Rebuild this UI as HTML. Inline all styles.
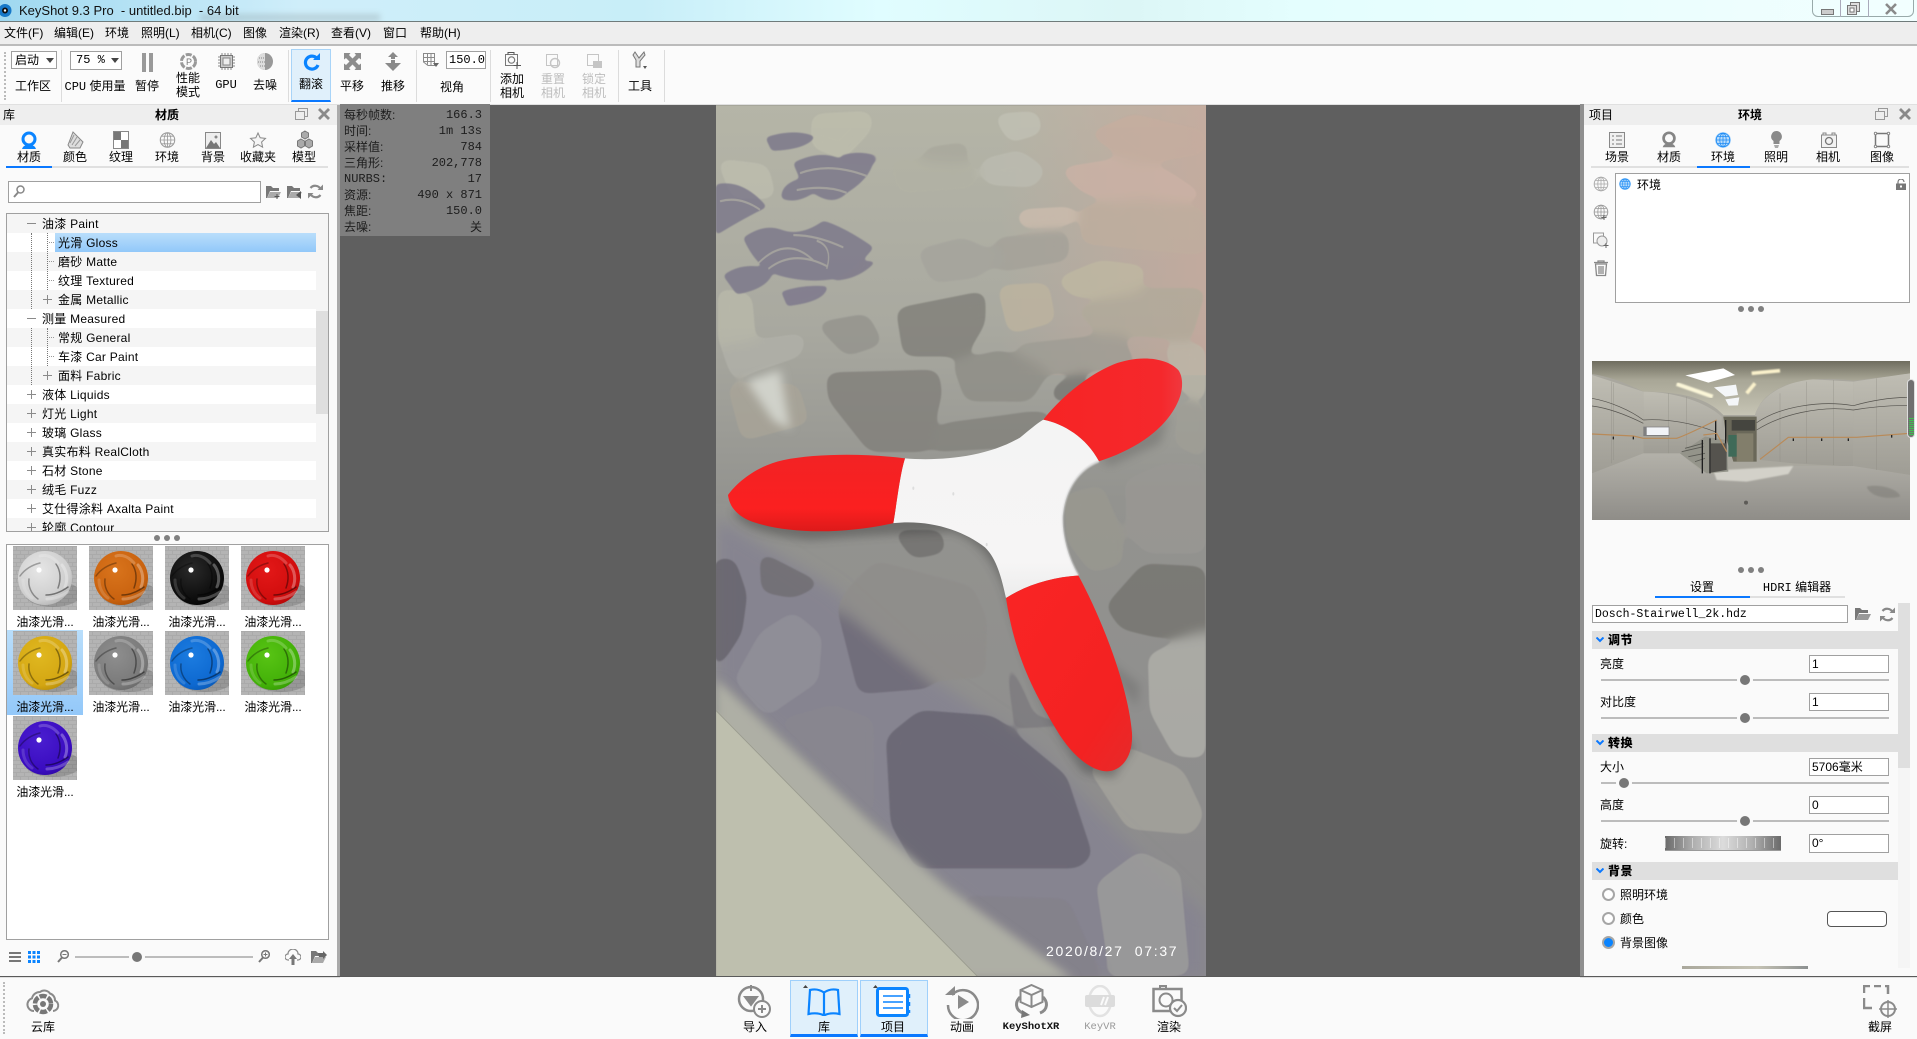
<!DOCTYPE html>
<html lang="zh"><head><meta charset="utf-8"><title>KeyShot 9.3 Pro</title>
<style>
html,body{margin:0;padding:0;width:1917px;height:1039px;overflow:hidden;background:#fafafa}
body{position:relative;font:12px/16px "Liberation Sans","WenQuanYi Zen Hei","Noto Sans CJK SC",sans-serif;color:#000}
.a{position:absolute}
.t{position:absolute;white-space:nowrap}
.c{position:absolute;white-space:nowrap;transform:translateX(-50%);text-align:center}
.m{font-family:"Liberation Mono","WenQuanYi Zen Hei","Noto Sans CJK SC",monospace}
.g{color:#bdbdbd}
.i{position:absolute;color:#858585;overflow:visible}
.box{position:absolute;background:#fff;border:1px solid #a0a0a0;box-sizing:border-box}
.sep{position:absolute;top:50px;height:52px;width:1px;background:#dcdcdc}
.row{position:absolute;left:7px;width:309px;height:19px;line-height:21px;white-space:nowrap}
.row span{position:absolute;white-space:nowrap;letter-spacing:.25px}
.pm{position:absolute;width:9px;height:9px;top:5px}
.pm:before{content:"";position:absolute;left:0;right:0;top:4px;height:1px;background:#8a8a8a}
.pl:after{content:"";position:absolute;top:0;bottom:0;left:4px;width:1px;background:#8a8a8a}
.vd{position:absolute;width:0;border-left:1px dotted #777}
.hd{position:absolute;width:5px;height:0;border-top:1px dotted #999}
.dot{position:absolute;width:6px;height:6px;border-radius:50%;background:#808080}
.sl{position:absolute;height:2px;background:#bcbcbc}
.kn{position:absolute;width:10px;height:10px;border-radius:50%;background:#777;box-shadow:0 0 0 3px #fafafa}
.sec{position:absolute;left:1592px;width:306px;height:18px;background:#dfdfdf;font-weight:bold;line-height:18px}
.sec b{position:absolute;left:16px;letter-spacing:.5px}
.sec svg{position:absolute;left:4px;top:6px}
.inp{position:absolute;left:1809px;width:80px;height:18px;background:#fff;border:1px solid #a0a0a0;box-sizing:border-box;line-height:16px;padding-left:2px;font-size:12px}
.rd{position:absolute;left:1602px;border-radius:50%;background:#fff;border:2px solid #a6a6a6;box-sizing:content-box;width:9px;height:9px}
.th{position:absolute;width:64px;height:64px}
.lb{position:absolute;width:76px;text-align:center;white-space:nowrap;letter-spacing:-.1px}
.st{position:absolute;left:344px;white-space:nowrap;color:#1d1d1d}
.sv{position:absolute;right:1435px;white-space:nowrap;color:#1d1d1d}
.bb{position:absolute;top:980px;width:68px;height:57px;box-sizing:border-box;background:#e0f0fb;border:1px solid #9fd0fb;border-bottom:3px solid #0a78ff}
</style></head><body>
<svg width="0" height="0" style="position:absolute"><defs>
<symbol id="globe" viewBox="0 0 20 20"><circle cx="10" cy="10" r="8.5" fill="none" stroke="currentColor" stroke-width="1.2"/><ellipse cx="10" cy="10" rx="4" ry="8.5" fill="none" stroke="currentColor" stroke-width="1"/><path d="M10 1.5v17M1.5 10h17M3 5.500h14M3 14.500h14" stroke="currentColor" fill="none"/></symbol>
<symbol id="ball" viewBox="0 0 20 20"><circle cx="10" cy="8" r="6" fill="none" stroke="currentColor" stroke-width="3"/><path d="M3 18c1-3 3-4 7-4s6 1 7 4z" fill="currentColor"/></symbol>
<symbol id="blades" viewBox="0 0 64 64"><g fill="none" stroke-linecap="round"><path d="M7 30C12 23 19 19 27 17" stroke="#000" stroke-opacity=".3" stroke-width="1.500"/><path d="M27 10c6-2 13 1 18 7" stroke="#fff" stroke-opacity=".2" stroke-width="3"/><path d="M43 18c5 7 5 16 2 24" stroke="#000" stroke-opacity=".4" stroke-width="1.500"/><path d="M49 19c5 6 6 15 3 22" stroke="#fff" stroke-opacity=".3" stroke-width="3"/><path d="M33 49c8 0 15-3 22-8" stroke="#000" stroke-opacity=".45" stroke-width="1.500"/><path d="M34 53c8 0 15-3 21-7" stroke="#fff" stroke-opacity=".25" stroke-width="3"/><path d="M16 33c-1 7 2 15 9 20" stroke="#000" stroke-opacity=".35" stroke-width="1.500"/><path d="M10 34c0 7 3 14 9 18" stroke="#fff" stroke-opacity=".15" stroke-width="3"/></g></symbol>
<pattern id="chk" width="8" height="8" patternUnits="userSpaceOnUse"><rect width="8" height="8" fill="#b4b4b4"/><path d="M0 0h8v1H0zM0 4h8v1H0zM3 0h1v4H3zM7 4h1v4H7z" fill="#aaa"/></pattern>
<radialGradient id="s1" cx=".4" cy=".35" r=".8"><stop offset="0" stop-color="#e6e6e6"/><stop offset=".7" stop-color="#cdcdcd"/><stop offset="1" stop-color="#a5a5a5"/></radialGradient>
<radialGradient id="s2" cx=".4" cy=".35" r=".8"><stop offset="0" stop-color="#d9741c"/><stop offset=".7" stop-color="#c9620f"/><stop offset="1" stop-color="#9a4a08"/></radialGradient>
<radialGradient id="s3" cx=".4" cy=".35" r=".8"><stop offset="0" stop-color="#2a2a2a"/><stop offset=".7" stop-color="#0c0c0c"/><stop offset="1" stop-color="#000"/></radialGradient>
<radialGradient id="s4" cx=".4" cy=".35" r=".8"><stop offset="0" stop-color="#e31818"/><stop offset=".7" stop-color="#d00d0d"/><stop offset="1" stop-color="#a00404"/></radialGradient>
<radialGradient id="s5" cx=".4" cy=".35" r=".8"><stop offset="0" stop-color="#e0b820"/><stop offset=".7" stop-color="#d4a612"/><stop offset="1" stop-color="#a67e04"/></radialGradient>
<radialGradient id="s6" cx=".4" cy=".35" r=".8"><stop offset="0" stop-color="#8e8e8e"/><stop offset=".7" stop-color="#7a7a7a"/><stop offset="1" stop-color="#5e5e5e"/></radialGradient>
<radialGradient id="s7" cx=".4" cy=".35" r=".8"><stop offset="0" stop-color="#1c7ce0"/><stop offset=".7" stop-color="#0d68d0"/><stop offset="1" stop-color="#0a50a4"/></radialGradient>
<radialGradient id="s8" cx=".4" cy=".35" r=".8"><stop offset="0" stop-color="#58c414"/><stop offset=".7" stop-color="#42b008"/><stop offset="1" stop-color="#2c8c02"/></radialGradient>
<radialGradient id="s9" cx=".4" cy=".35" r=".8"><stop offset="0" stop-color="#4a1ed0"/><stop offset=".7" stop-color="#3a0cc0"/><stop offset="1" stop-color="#280896"/></radialGradient>
<symbol id="sph" viewBox="0 0 64 64"><rect width="64" height="64" fill="url(#chk)"/><ellipse cx="40" cy="48" rx="28" ry="13" fill="#000" opacity=".16"/></symbol>
</defs></svg>

<!-- title bar -->
<div class="a" style="left:0;top:0;width:1917px;height:21px;background:linear-gradient(90deg,#9fd8f0 0,#cfeefa 300px,#c8eef8 640px,#e0fdff 880px,#dcf6f6 1130px,#e4fefe 1300px,#eafefe 1600px,#f2ffff 1917px)"></div>
<div class="a" style="left:200px;top:14px;width:180px;height:7px;background:#8d9ca0;opacity:.35;filter:blur(3px)"></div>
<div class="a" style="left:0;top:21px;width:1917px;height:1px;background:#6f7b7b"></div>
<svg class="a" style="left:0;top:3px" width="13" height="15" viewBox="0 0 13 15"><circle cx="5" cy="7.500" r="6.500" fill="#1678c8"/><circle cx="5" cy="7.500" r="3" fill="#111"/><circle cx="5" cy="7.500" r="1.200" fill="#fff"/></svg>
<div class="t" style="left:19px;top:3px;font-size:13px;line-height:16px;color:#111">KeyShot 9.3 Pro &nbsp;- untitled.bip &nbsp;- 64 bit</div>
<div class="a" style="left:1812px;top:-1px;width:102px;height:18px;border:1px solid #9aa;border-radius:0 0 6px 6px;box-sizing:border-box"></div>
<div class="a" style="left:1840px;top:0;width:1px;height:17px;background:#aab"></div>
<div class="a" style="left:1868px;top:0;width:1px;height:17px;background:#aab"></div>
<div class="a" style="left:1821px;top:9px;width:11px;height:4px;background:#ccc;border:1px solid #777"></div>
<svg class="a" style="left:1847px;top:2px" width="13" height="13" viewBox="0 0 13 13"><rect x="3.500" y=".5" width="9" height="9" fill="#ddd" stroke="#777"/><rect x=".5" y="3.500" width="9" height="9" fill="#ddd" stroke="#777"/><rect x="3" y="6" width="4" height="4" fill="#fff" stroke="#777"/></svg>
<svg class="a" style="left:1885px;top:3px" width="12" height="12" viewBox="0 0 12 12"><path d="M1 1l10 10M11 1L1 11" stroke="#8a8a8a" stroke-width="2.600"/></svg>

<!-- menu -->
<div class="a" style="left:0;top:22px;width:1917px;height:24px;background:#eee;border-bottom:2px solid #bbb;box-sizing:border-box"></div>
<div class="t" style="left:4px;top:25px">文件(F)</div><div class="t" style="left:54px;top:25px">编辑(E)</div><div class="t" style="left:105px;top:25px">环境</div><div class="t" style="left:141px;top:25px">照明(L)</div><div class="t" style="left:191px;top:25px">相机(C)</div><div class="t" style="left:243px;top:25px">图像</div><div class="t" style="left:279px;top:25px">渲染(R)</div><div class="t" style="left:331px;top:25px">查看(V)</div><div class="t" style="left:383px;top:25px">窗口</div><div class="t" style="left:420px;top:25px">帮助(H)</div>

<!-- toolbar -->
<div class="a" style="left:0;top:46px;width:1917px;height:58px;background:#fbfbfb"></div>
<div class="a" style="left:4px;top:52px;height:48px;width:0;border-left:2px dotted #bbb"></div>
<div class="sep" style="left:61px"></div><div class="sep" style="left:288px"></div><div class="sep" style="left:416px"></div><div class="sep" style="left:490px"></div><div class="sep" style="left:618px"></div><div class="sep" style="left:664px"></div>
<div class="box" style="left:11px;top:51px;width:46px;height:18px;background:#fff"></div><div class="t" style="left:15px;top:52px">启动</div>
<svg class="a" style="left:46px;top:58px" width="8" height="5"><path d="M0 0h8L4 5z" fill="#444"/></svg>
<div class="box" style="left:70px;top:51px;width:52px;height:19px"></div><div class="t m" style="left:76px;top:52px">75 %</div>
<svg class="a" style="left:111px;top:58px" width="8" height="5"><path d="M0 0h8L4 5z" fill="#444"/></svg>
<div class="c" style="left:33px;top:78px">工作区</div>
<div class="c" style="left:95px;top:78px"><span class="m">CPU</span> 使用量</div>
<div class="c" style="left:147px;top:78px">暂停</div>
<svg class="i" style="left:142px;top:53px" width="11" height="19"><rect width="4" height="19" fill="#999"/><rect x="7" width="4" height="19" fill="#999"/></svg>
<div class="c" style="left:188px;top:70px">性能</div><div class="c" style="left:188px;top:84px">模式</div>
<svg class="i" style="left:180px;top:52px" width="17" height="19" viewBox="0 0 17 19"><circle cx="8.500" cy="9.500" r="7" fill="none" stroke="#999" stroke-width="3" stroke-dasharray="6 1.500"/><text x="6" y="13" font-size="9" fill="#777" font-family="Liberation Sans">P</text></svg>
<div class="c m" style="left:226px;top:77px">GPU</div>
<svg class="i" style="left:218px;top:53px" width="17" height="17" viewBox="0 0 17 17"><rect x="2.500" y="2.500" width="12" height="12" fill="#ccc" stroke="#777"/><rect x="5" y="5" width="7" height="7" fill="#eee" stroke="#888"/><path d="M4 0v17M7 0v17M10 0v17M13 0v17M0 4h17M0 7h17M0 10h17M0 13h17" stroke="#888" stroke-dasharray="2 13"/></svg>
<div class="c" style="left:265px;top:77px">去噪</div>
<svg class="i" style="left:257px;top:53px" width="16" height="17" viewBox="0 0 16 17"><ellipse cx="8" cy="8.500" rx="8" ry="8.500" fill="#999"/><path d="M8 0A8 8.500 0 0 0 8 17z" fill="#ddd"/><path d="M2 5h6M1 9h7M3 13h5" stroke="#888" stroke-dasharray="1 1"/></svg>
<div class="a" style="left:291px;top:49px;width:40px;height:53px;background:#e0f0fb;border:1px solid #a8d4f8;border-bottom:2px solid #0a78ff;box-sizing:border-box"></div>
<svg class="a" style="left:303px;top:53px" width="17" height="18" viewBox="0 0 17 18"><path d="M14 5.500A6.500 6.500 0 1 0 15 12" fill="none" stroke="#0a84ff" stroke-width="3.200"/><path d="M10 7h7V0z" fill="#0a84ff"/></svg>
<div class="c" style="left:311px;top:76px">翻滚</div>
<svg class="a" style="left:344px;top:53px" width="17" height="17" viewBox="0 0 17 17"><path d="M0 0h6.500L5 2l3.500 3.500L12 2l-1.500-2H17v6.500L15 5l-3.500 3.500L15 12l2-1.500V17h-6.500L12 15l-3.500-3.500L5 15l1.500 2H0v-6.500L2 12l3.500-3.500L2 5l-2 1.500z" fill="#8d8d8d"/></svg>
<div class="c" style="left:352px;top:78px">平移</div>
<svg class="a" style="left:385px;top:52px" width="16" height="19" viewBox="0 0 16 19"><path d="M8 0l5 5h-3v2H6V5H3zM6 8h4v3h6l-8 8-8-8h6z" fill="#8a8a8a"/></svg>
<div class="c" style="left:393px;top:78px">推移</div>
<svg class="a" style="left:423px;top:53px" width="16" height="15" viewBox="0 0 16 15"><path d="M.5.500h11v12H5L.5 9zM4.500.500v11M8 .500v12M.5 4.500h11M.5 8.500h11" fill="none" stroke="#8a8a8a"/><path d="M10 10h6l-3 4z" fill="#666"/></svg>
<div class="box" style="left:446px;top:51px;width:40px;height:18px"></div><div class="t m" style="left:449px;top:52px">150.0</div>
<div class="c" style="left:452px;top:79px">视角</div>
<svg class="i" style="left:505px;top:52px" width="16" height="17" viewBox="0 0 16 17"><rect x=".5" y="2.500" width="12" height="11" fill="none" stroke="#777"/><circle cx="6.500" cy="8" r="3.200" fill="none" stroke="#777" stroke-width="1.200"/><path d="M3 2.500V.500h6v2M12 10v7M8.500 13.500H16" stroke="#555" fill="none"/></svg>
<div class="c" style="left:512px;top:71px">添加</div><div class="c" style="left:512px;top:85px">相机</div>
<svg class="i" style="left:546px;top:52px" width="15" height="17" viewBox="0 0 15 17" opacity=".4"><rect x=".5" y="2.500" width="11" height="11" fill="none" stroke="#777"/><circle cx="9" cy="11" r="4.500" fill="none" stroke="#777" stroke-width="1.500"/></svg>
<div class="c g" style="left:553px;top:71px">重置</div><div class="c g" style="left:553px;top:85px">相机</div>
<svg class="i" style="left:587px;top:52px" width="15" height="17" viewBox="0 0 15 17" opacity=".4"><rect x=".5" y="2.500" width="11" height="11" fill="none" stroke="#777"/><rect x="6" y="9" width="9" height="7" fill="#777"/></svg>
<div class="c g" style="left:594px;top:71px">锁定</div><div class="c g" style="left:594px;top:85px">相机</div>
<svg class="i" style="left:632px;top:51px" width="16" height="19" viewBox="0 0 16 19"><path d="M3 1l4 6 5-6 1 3-5 6v6H4V9L1 4z" fill="#ddd" stroke="#777"/><path d="M11 15h4l-2 3z" fill="#555"/></svg>
<div class="c" style="left:640px;top:78px">工具</div>

<!-- viewport -->
<div class="a" style="left:337px;top:104px;width:3px;height:873px;background:#aaa"></div>
<div class="a" style="left:340px;top:104px;width:1240px;height:872px;background:#5f5f5f"></div>
<div class="a" style="left:0;top:104px;width:1917px;height:1px;background:#e0e0e0"></div>

<!-- photo -->
<svg class="a" style="left:700px;top:100px;width:520px;height:880px" viewBox="0 0 1560 1564" preserveAspectRatio="none">
<defs>
<clipPath id="pc"><rect x="48" y="9" width="1470" height="1553"/></clipPath>
<linearGradient id="bgv" x1="0" y1="0" x2="0" y2="1"><stop offset="0" stop-color="#b5b5a7"/><stop offset=".25" stop-color="#a9a9a0"/><stop offset=".45" stop-color="#93938f"/><stop offset="1" stop-color="#8b8a8c"/></linearGradient>
<linearGradient id="pink" x1="0" y1="0" x2="1" y2="0"><stop offset="0" stop-color="#cba99c" stop-opacity="0"/><stop offset="1" stop-color="#cba99c" stop-opacity=".7"/></linearGradient>
<filter id="goo" filterUnits="userSpaceOnUse" x="0" y="0" width="1560" height="1564"><feGaussianBlur stdDeviation="20 11"/><feColorMatrix type="matrix" values="1 0 0 0 0 0 1 0 0 0 0 0 1 0 0 0 0 0 16 -7"/><feGaussianBlur stdDeviation="1.500 1"/></filter>
<filter id="goo2" filterUnits="userSpaceOnUse" x="0" y="0" width="1560" height="1564"><feGaussianBlur stdDeviation="6 4"/><feColorMatrix type="matrix" values="1 0 0 0 0 0 1 0 0 0 0 0 1 0 0 0 0 0 12 -5"/><feGaussianBlur stdDeviation="1.500 1"/></filter>
<filter id="b3" filterUnits="userSpaceOnUse" x="0" y="0" width="1560" height="1564"><feGaussianBlur stdDeviation="14 8"/></filter>
<filter id="b4" filterUnits="userSpaceOnUse" x="0" y="0" width="1560" height="1564"><feGaussianBlur stdDeviation="24 14"/></filter>
<filter id="bs" filterUnits="userSpaceOnUse" x="0" y="0" width="1560" height="1564"><feGaussianBlur stdDeviation="2 1.500"/></filter>
<linearGradient id="redg" x1="0" y1="0" x2="0" y2="1"><stop offset="0" stop-color="#f22224"/><stop offset=".7" stop-color="#fb2020"/><stop offset="1" stop-color="#dd1a1a"/></linearGradient>
<linearGradient id="redg2" x1="0" y1="0" x2="1" y2="1"><stop offset="0" stop-color="#fa2424"/><stop offset=".75" stop-color="#f32222"/><stop offset="1" stop-color="#e62a2a"/></linearGradient>
<linearGradient id="redg3" x1="0" y1="0" x2="1" y2="0"><stop offset="0" stop-color="#f72424"/><stop offset=".85" stop-color="#f5282c"/><stop offset="1" stop-color="#f0383e"/></linearGradient>
<linearGradient id="wg" x1="0" y1="0" x2="0" y2="1"><stop offset="0" stop-color="#f4f4f4"/><stop offset=".8" stop-color="#f6f5f5"/><stop offset="1" stop-color="#ececec"/></linearGradient>
</defs>
<g clip-path="url(#pc)">
<rect x="48" y="9" width="1470" height="1553" fill="url(#bgv)"/>
<rect x="900" y="9" width="620" height="480" fill="url(#pink)"/>
<!-- purple band -->
<path d="M48 740L400 870 700 1030 1000 1150 1300 1330 1518 1450V1562H1100L740 1400 48 1030z" fill="#868490" filter="url(#b4)"/>
<g filter="url(#goo)" stroke-linejoin="round" stroke-width="10" opacity=".72">
<path d="M340 30L510 25 510 50 430 100 340 80z" fill="#bfbfae" stroke="#bfbfae"/>
<path d="M890 30L1010 25 1020 55 930 70z" fill="#c2c2b6" stroke="#c2c2b6"/>
<path d="M850 110L960 95 1030 125 1000 150 860 145z" fill="#bdbdb2" stroke="#bdbdb2"/>
<path d="M680 90L800 80 790 110 670 120z" fill="#a8a79c" stroke="#a8a79c"/>
<path d="M1180 60L1300 30 1510 60 1510 90 1300 110z" fill="#c6ad9f" stroke="#c6ad9f"/>
<path d="M1090 125L1250 110 1400 130 1500 170 1280 180 1150 160z" fill="#cdb2a6" stroke="#cdb2a6"/>
<path d="M1150 195L1330 180 1510 200 1510 270 1320 260 1150 250z" fill="#bfae9e" stroke="#bfae9e"/>
<path d="M960 200L1120 195 1120 215 960 220z" fill="#cfbeaf" stroke="#cfbeaf"/>
<path d="M890 250L1100 240 1100 280 900 300z" fill="#a3a098" stroke="#a3a098"/>
<path d="M1080 320L1200 290 1330 300 1310 340 1120 345z" fill="#c0baa2" stroke="#c0baa2"/>
<path d="M900 335L1040 330 1060 390 930 410z" fill="#bfb59f" stroke="#bfb59f"/>
<path d="M1140 375L1340 340 1510 340 1470 420 1200 410z" fill="#b0aa9a" stroke="#b0aa9a"/>
<path d="M1400 440L1510 440 1510 530 1440 510z" fill="#bcb8a9" stroke="#bcb8a9"/>
<path d="M660 270L790 250 900 280 830 310 700 320z" fill="#a4a39c" stroke="#a4a39c"/>
<path d="M60 110L200 120 220 170 100 170z" fill="#bfbfb0" stroke="#bfbfb0"/>
<path d="M60 340L150 350 160 420 60 430z" fill="#bbbbac" stroke="#bbbbac"/>
<path d="M580 110L820 120 820 150 600 160z" fill="#b2b2a4" stroke="#b2b2a4"/>
<path d="M595 375L850 345 850 395 795 450 615 450z" fill="#7b7a74" stroke="#7b7a74"/>
<path d="M385 490L710 485 720 520 680 620 510 620 390 530z" fill="#7e7c77" stroke="#7e7c77"/>
<path d="M765 470L900 450 1040 480 990 530 800 530z" fill="#8c8b84" stroke="#8c8b84"/>
<path d="M730 580L990 560 1050 560 1000 610 700 620z" fill="#807f79" stroke="#807f79"/>
<path d="M360 400L500 385 540 430 440 450z" fill="#92918b" stroke="#92918b"/>
<path d="M70 440L310 420 300 450 100 490z" fill="#b2b2aa" stroke="#b2b2aa"/>
<path d="M90 510L290 510 320 570 130 600z" fill="#aaa598" stroke="#aaa598"/>
<path d="M950 440L1260 420 1300 470 1050 480z" fill="#9d9b93" stroke="#9d9b93"/>
<path d="M1070 510L1160 490 1130 530 1060 530z" fill="#73726e" stroke="#73726e"/>
<path d="M1280 680L1400 650 1510 655 1510 800 1340 800 1290 770z" fill="#9a9894" stroke="#9a9894"/>
<path d="M1225 900L1330 830 1510 835 1510 945 1370 950 1265 935z" fill="#72716c" stroke="#72716c"/>
<path d="M1350 990L1510 950 1510 1165 1425 1160 1355 1085z" fill="#b4b4ad" stroke="#b4b4ad"/>
<path d="M1175 1190L1280 1155 1445 1195 1505 1270 1475 1300 1285 1290z" fill="#a7a69e" stroke="#a7a69e"/>
<path d="M1195 1395L1320 1340 1435 1375 1462 1550 1235 1555z" fill="#a0a09d" stroke="#a0a09d"/>
<path d="M1100 705L1205 690 1262 775 1262 820 1175 835 1105 780z" fill="#9a9990" stroke="#9a9990"/>
<path d="M1440 540L1510 550 1510 630 1430 610z" fill="#a09f96" stroke="#a09f96"/>
<path d="M450 870L530 825 815 870 855 925 850 1020 650 1030 420 900z" fill="#8f8d8a" stroke="#8f8d8a"/>
<path d="M420 910L690 1040 480 1050z" fill="#6a6673" stroke="#6a6673"/>
<path d="M48 820L100 820 135 880 120 945 48 1010z" fill="#625f67" stroke="#625f67"/>
<path d="M185 810L350 860 280 880 190 870z" fill="#6d6b6e" stroke="#6d6b6e"/>
<path d="M110 1030L185 950 280 915 360 955 350 1030 200 1090z" fill="#93929a" stroke="#93929a"/>
<path d="M250 1105L400 1080 515 1105 515 1270 400 1195z" fill="#89878f" stroke="#89878f"/>
<path d="M565 1135L660 1090 880 1100 1095 1205 1170 1340 1135 1360 650 1360 578 1285z" fill="#64616d" stroke="#64616d"/>
<path d="M920 990L1000 1100 1120 1110 950 1110z" fill="#7a787d" stroke="#7a787d"/>
<path d="M790 1420L1100 1425 1200 1560 1000 1560z" fill="#84818a" stroke="#84818a"/>
<path d="M590 770L720 770 730 800 640 810z" fill="#6d6c6a" stroke="#6d6c6a"/>
</g>
<!-- cream floor -->
<path d="M48 1030L520 1290 740 1400 1120 1562H48z" fill="#aeafa5" filter="url(#b3)"/>
<path d="M48 1085L840 1562H48z" fill="#bebfae" filter="url(#bs)"/>
<path d="M48 1085L840 1562" stroke="#9a9b8f" stroke-width="2" fill="none"/>
<!-- flowers -->
<g filter="url(#goo2)" fill="#7d798b" opacity=".85">
<path d="M130 245Q190 220 240 230 300 245 370 215 430 225 520 262 480 295 400 318 320 325 240 312 170 300 130 245z"/>
<path d="M70 312Q130 285 220 302 210 335 110 345z"/>
<path d="M240 340Q310 325 385 330 385 360 260 368z" opacity=".7"/>
<path d="M400 292Q470 280 530 287 480 320 405 322z" opacity=".75"/>
<path d="M280 112Q360 88 420 105 470 90 520 102 520 135 440 165 400 190 340 165 290 185 245 175 240 150 300 140z"/>
<path d="M48 150Q130 140 200 190 130 210 48 240z"/>
<path d="M197 67Q280 50 345 65 320 88 215 90z"/>
<path d="M410 92Q520 85 610 100 560 122 430 110z" opacity=".4"/>
<path d="M560 182Q700 175 850 220 700 236 600 220z" opacity=".28"/>
</g>
<g fill="none" stroke="#b0afa4" stroke-width="4" opacity=".7"><path d="M175 290Q260 240 340 285M205 300Q280 265 380 295M280 240Q350 240 430 262M350 250Q400 260 380 300M300 130Q390 110 500 135M290 160Q380 150 440 165M60 180Q120 170 180 195"/></g>
<!-- light patch -->
<path d="M140 500L240 480 270 585 220 570z" fill="#d0d2ca" filter="url(#b3)"/>
<!-- shadow -->
<path d="M100 730Q120 770 330 782 600 770 760 768 870 790 920 880 1010 1080 1150 1195L1240 1205 1300 1150 1000 860 840 690 600 720 300 700z" fill="#333" opacity=".38" filter="url(#b3)"/>
<path d="M1197 640L1410 560 1380 610 1230 650z" fill="#444" opacity=".28" filter="url(#b3)"/>
<path d="M1130 950L1320 1040 1310 1080 1220 1010z" fill="#444" opacity=".22" filter="url(#b3)"/>
<!-- boomerang -->
<path d="M615 637C720 642 860 635 960 600 985 588 1010 575 1030 568 1090 575 1160 600 1197 642 1140 655 1095 690 1088 740 1086 775 1105 815 1135 845 1060 848 985 860 918 885 905 850 890 815 855 795 790 765 690 745 580 752 592 710 600 665 615 637z" fill="url(#wg)"/>
<path d="M1197 642C1140 655 1095 690 1088 740 1086 775 1105 815 1135 845" fill="none" stroke="#d8d8d8" stroke-width="4" filter="url(#bs)"/>
<path d="M615 637C500 628 350 628 250 640 170 650 110 680 84 702 88 722 110 738 150 748 260 772 430 772 580 752 592 710 600 665 615 637z" fill="url(#redg)"/>
<path d="M1030 568C1080 530 1160 490 1240 470 1320 452 1400 458 1435 480 1450 492 1450 515 1435 535 1395 590 1290 625 1197 642 1160 600 1090 575 1030 568z" fill="url(#redg3)"/>
<path d="M918 885C985 860 1060 848 1135 845 1200 915 1285 1040 1296 1125 1300 1170 1260 1195 1215 1193 1165 1190 1110 1160 1070 1120 1000 1050 945 990 918 885z" fill="url(#redg2)"/>
<circle cx="760" cy="700" r="3" fill="#dcdcdc"/><circle cx="860" cy="790" r="3" fill="#dcdcdc"/><circle cx="640" cy="690" r="3" fill="#ddd"/>
</g>
</svg>
<div class="t" style="left:1046px;top:943px;color:#fff;font-size:14px;letter-spacing:1.700px;font-family:'Liberation Sans',sans-serif">2020/8/27&nbsp; 07:37</div>

<!-- stats -->
<div class="a" style="left:340px;top:104px;width:150px;height:132px;background:#7f7f7f"></div>
<div class="st" style="top:107px">每秒帧数:</div><div class="sv m" style="top:107px">166.3</div>
<div class="st" style="top:123px">时间:</div><div class="sv m" style="top:123px">1m 13s</div>
<div class="st" style="top:139px">采样值:</div><div class="sv m" style="top:139px">784</div>
<div class="st" style="top:155px">三角形:</div><div class="sv m" style="top:155px">202,778</div>
<div class="st m" style="top:171px">NURBS:</div><div class="sv m" style="top:171px">17</div>
<div class="st" style="top:187px">资源:</div><div class="sv m" style="top:187px">490 x 871</div>
<div class="st" style="top:203px">焦距:</div><div class="sv m" style="top:203px">150.0</div>
<div class="st" style="top:219px">去噪:</div><div class="sv" style="top:219px">关</div>

<!-- left panel -->
<div class="a" style="left:0;top:105px;width:337px;height:872px;background:#fafafa"></div>
<div class="a" style="left:0;top:105px;width:337px;height:20px;background:#eee"></div>
<div class="t" style="left:3px;top:107px">库</div><div class="c" style="left:167px;top:107px;font-weight:bold">材质</div>
<svg class="a" style="left:295px;top:108px" width="13" height="12" viewBox="0 0 13 12"><rect x="3.500" y=".5" width="9" height="8" fill="none" stroke="#999"/><rect x=".5" y="3.500" width="9" height="8" fill="#eee" stroke="#999"/></svg>
<svg class="a" style="left:318px;top:108px" width="12" height="12" viewBox="0 0 12 12"><path d="M1 1l10 10M11 1L1 11" stroke="#8a8a8a" stroke-width="2.800"/></svg>
<svg class="i" style="left:19px;top:131px;color:#0a84ff" width="20" height="20"><use href="#ball"/></svg>
<svg class="i" style="left:66px;top:131px" width="18" height="18" viewBox="0 0 18 18"><path d="M2 14L7 1l10 10-3 6H4z" fill="#ddd" stroke="#888"/><path d="M4 12L8 4M6 14l5-8M9 15l5-6" stroke="#999"/></svg>
<svg class="i" style="left:113px;top:131px" width="16" height="18" viewBox="0 0 16 18"><rect x=".5" y=".5" width="15" height="17" fill="#fff" stroke="#888"/><rect x="1" y="1" width="7" height="8" fill="#777"/><rect x="8" y="9" width="7" height="8" fill="#777"/></svg>
<svg class="i" style="left:159px;top:131px;color:#999" width="17" height="18"><use href="#globe"/></svg>
<svg class="i" style="left:205px;top:132px" width="16" height="17" viewBox="0 0 16 17"><rect x=".5" y=".5" width="15" height="16" fill="#eee" stroke="#888"/><path d="M1 16l5-8 3 4 2-2 4 6z" fill="#777"/><circle cx="11" cy="5" r="1.500" fill="#888"/></svg>
<svg class="i" style="left:250px;top:131px" width="16" height="18" viewBox="0 0 16 16"><path d="M8 1l2.200 4.800 5.300.6-3.900 3.600 1 5.200L8 12.600 3.400 15.200l1-5.200L.5 6.400l5.300-.6z" fill="#f5f5f5" stroke="#888"/></svg>
<svg class="i" style="left:297px;top:130px" width="16" height="19" viewBox="0 0 16 19"><path d="M8 1l3.500 2v4L8 9 4.500 7V3zM4 9l3.500 2v5L4 18 .5 16v-5zM12 9l3.500 2v5L12 18l-3.500-2v-5z" fill="#aaa" stroke="#777"/></svg>
<div class="c" style="left:29px;top:149px">材质</div><div class="c" style="left:75px;top:149px">颜色</div><div class="c" style="left:121px;top:149px">纹理</div><div class="c" style="left:167px;top:149px">环境</div><div class="c" style="left:213px;top:149px">背景</div><div class="c" style="left:258px;top:149px">收藏夹</div><div class="c" style="left:304px;top:149px">模型</div>
<div class="a" style="left:6px;top:166px;width:322px;height:2px;background:#e0e0e0"></div>
<div class="a" style="left:6px;top:166px;width:46px;height:2px;background:#0a78ff"></div>
<div class="box" style="left:8px;top:181px;width:253px;height:22px"></div>
<svg class="a" style="left:13px;top:185px" width="12" height="13" viewBox="0 0 12 13"><circle cx="7.500" cy="4.500" r="3.500" fill="none" stroke="#888" stroke-width="1.500"/><path d="M5 7.500L1 12" stroke="#888" stroke-width="2"/></svg>
<svg class="a" style="left:266px;top:185px" width="16" height="14" viewBox="0 0 16 14"><path d="M0 1h5l2 2h6v3H4L1 13H0z" fill="#777"/><path d="M4 7h11l-3 6H1z" fill="#aaa"/><path d="M11 9v5M8.500 11.500h5" stroke="#555"/></svg>
<svg class="a" style="left:287px;top:185px" width="16" height="14" viewBox="0 0 16 14"><path d="M0 1h5l2 2h6v3H4L1 13H0z" fill="#777"/><path d="M4 7h11l-3 6H1z" fill="#aaa"/><path d="M9 10l5-4v8z" fill="#555"/></svg>
<svg class="a" style="left:308px;top:184px" width="15" height="15" viewBox="0 0 15 15"><path d="M12.500 5A6 6 0 0 0 2.500 4M2.500 10a6 6 0 0 0 10 1" fill="none" stroke="#888" stroke-width="2.200"/><path d="M9.500 6H15V.5zM5.500 9H0v5.500z" fill="#888"/></svg>

<!-- tree -->
<div class="a" style="left:6px;top:213px;width:323px;height:319px;background:#f5f5f5;border:1px solid #a0a0a0;box-sizing:border-box;overflow:hidden">
<div style="position:absolute;left:-7px;top:-214px;width:340px;height:540px">
<div class="row" style="top:214px;background:#f5f5f5"><i class="pm" style="left:20px"></i><span style="left:35px">油漆 Paint</span></div>
<div class="row" style="top:233px;background:#fff"></div>
<div class="a" style="left:55px;top:233px;width:261px;height:19px;background:linear-gradient(#b9defb,#92c8f9)"></div>
<div class="row" style="top:233px;background:none"><span style="left:51px">光滑 Gloss</span></div>
<div class="row" style="top:252px;background:#f5f5f5"><span style="left:51px">磨砂 Matte</span></div>
<div class="row" style="top:271px;background:#fff"><span style="left:51px">纹理 Textured</span></div>
<div class="row" style="top:290px;background:#f5f5f5"><i class="pm pl" style="left:36px"></i><span style="left:51px">金属 Metallic</span></div>
<div class="row" style="top:309px;background:#fff"><i class="pm" style="left:20px"></i><span style="left:35px">测量 Measured</span></div>
<div class="row" style="top:328px;background:#f5f5f5"><span style="left:51px">常规 General</span></div>
<div class="row" style="top:347px;background:#fff"><span style="left:51px">车漆 Car Paint</span></div>
<div class="row" style="top:366px;background:#f5f5f5"><i class="pm pl" style="left:36px"></i><span style="left:51px">面料 Fabric</span></div>
<div class="row" style="top:385px;background:#fff"><i class="pm pl" style="left:20px"></i><span style="left:35px">液体 Liquids</span></div>
<div class="row" style="top:404px;background:#f5f5f5"><i class="pm pl" style="left:20px"></i><span style="left:35px">灯光 Light</span></div>
<div class="row" style="top:423px;background:#fff"><i class="pm pl" style="left:20px"></i><span style="left:35px">玻璃 Glass</span></div>
<div class="row" style="top:442px;background:#f5f5f5"><i class="pm pl" style="left:20px"></i><span style="left:35px">真实布料 RealCloth</span></div>
<div class="row" style="top:461px;background:#fff"><i class="pm pl" style="left:20px"></i><span style="left:35px">石材 Stone</span></div>
<div class="row" style="top:480px;background:#f5f5f5"><i class="pm pl" style="left:20px"></i><span style="left:35px">绒毛 Fuzz</span></div>
<div class="row" style="top:499px;background:#fff"><i class="pm pl" style="left:20px"></i><span style="left:35px">艾仕得涂料 Axalta Paint</span></div>
<div class="row" style="top:518px;background:#f5f5f5"><i class="pm pl" style="left:20px"></i><span style="left:35px">轮廓 Contour</span></div>
<div class="vd" style="left:31px;top:233px;height:76px"></div><div class="vd" style="left:31px;top:328px;height:57px"></div>
<div class="vd" style="left:47px;top:233px;height:57px"></div><div class="vd" style="left:47px;top:328px;height:38px"></div>
<div class="hd" style="left:49px;top:242px"></div><div class="hd" style="left:49px;top:261px"></div><div class="hd" style="left:49px;top:280px"></div><div class="hd" style="left:49px;top:337px"></div><div class="hd" style="left:49px;top:356px"></div>
<div class="a" style="left:316px;top:311px;width:12px;height:103px;background:#dfdfdf"></div>
</div></div>
<div class="dot" style="left:154px;top:535px"></div><div class="dot" style="left:164px;top:535px"></div><div class="dot" style="left:174px;top:535px"></div>

<!-- materials -->
<div class="box" style="left:6px;top:544px;width:323px;height:396px"></div>
<div class="a" style="left:7px;top:630px;width:76px;height:85px;background:linear-gradient(#b9defb,#93c8f9)"></div>
<svg class="th" style="left:13px;top:546px" viewBox="0 0 64 64"><use href="#sph"/><circle cx="32" cy="32" r="27" fill="url(#s1)"/><use href="#blades"/><circle cx="26" cy="24" r="2.600" fill="#fff"/></svg>
<svg class="th" style="left:89px;top:546px" viewBox="0 0 64 64"><use href="#sph"/><circle cx="32" cy="32" r="27" fill="url(#s2)"/><use href="#blades"/><circle cx="26" cy="24" r="2.600" fill="#fff"/></svg>
<svg class="th" style="left:165px;top:546px" viewBox="0 0 64 64"><use href="#sph"/><circle cx="32" cy="32" r="27" fill="url(#s3)"/><use href="#blades"/><circle cx="26" cy="24" r="2.600" fill="#fff"/></svg>
<svg class="th" style="left:241px;top:546px" viewBox="0 0 64 64"><use href="#sph"/><circle cx="32" cy="32" r="27" fill="url(#s4)"/><use href="#blades"/><circle cx="26" cy="24" r="2.600" fill="#fff"/></svg>
<svg class="th" style="left:13px;top:631px" viewBox="0 0 64 64"><use href="#sph"/><circle cx="32" cy="32" r="27" fill="url(#s5)"/><use href="#blades"/><circle cx="26" cy="24" r="2.600" fill="#fff"/></svg>
<svg class="th" style="left:89px;top:631px" viewBox="0 0 64 64"><use href="#sph"/><circle cx="32" cy="32" r="27" fill="url(#s6)"/><use href="#blades"/><circle cx="26" cy="24" r="2.600" fill="#fff"/></svg>
<svg class="th" style="left:165px;top:631px" viewBox="0 0 64 64"><use href="#sph"/><circle cx="32" cy="32" r="27" fill="url(#s7)"/><use href="#blades"/><circle cx="26" cy="24" r="2.600" fill="#fff"/></svg>
<svg class="th" style="left:241px;top:631px" viewBox="0 0 64 64"><use href="#sph"/><circle cx="32" cy="32" r="27" fill="url(#s8)"/><use href="#blades"/><circle cx="26" cy="24" r="2.600" fill="#fff"/></svg>
<svg class="th" style="left:13px;top:716px" viewBox="0 0 64 64"><use href="#sph"/><circle cx="32" cy="32" r="27" fill="url(#s9)"/><use href="#blades"/><circle cx="26" cy="24" r="2.600" fill="#fff"/></svg>
<div class="lb" style="left:7px;top:614px">油漆光滑...</div><div class="lb" style="left:83px;top:614px">油漆光滑...</div><div class="lb" style="left:159px;top:614px">油漆光滑...</div><div class="lb" style="left:235px;top:614px">油漆光滑...</div>
<div class="lb" style="left:7px;top:699px">油漆光滑...</div><div class="lb" style="left:83px;top:699px">油漆光滑...</div><div class="lb" style="left:159px;top:699px">油漆光滑...</div><div class="lb" style="left:235px;top:699px">油漆光滑...</div>
<div class="lb" style="left:7px;top:784px">油漆光滑...</div>

<!-- left bottom bar -->
<svg class="a" style="left:9px;top:951px" width="12" height="12"><path d="M0 1h12v2H0zM0 5h12v2H0zM0 9h12v2H0z" fill="#777"/></svg>
<svg class="a" style="left:28px;top:951px" width="12" height="12"><path d="M0 0h3v3H0zM4.500 0h3v3h-3zM9 0h3v3H9zM0 4.500h3v3H0zM4.500 4.500h3v3h-3zM9 4.500h3v3H9zM0 9h3v3H0zM4.500 9h3v3h-3zM9 9h3v3H9z" fill="#0a84ff"/></svg>
<svg class="a" style="left:57px;top:950px" width="12" height="13" viewBox="0 0 12 13"><circle cx="7.500" cy="4.500" r="3.800" fill="none" stroke="#777" stroke-width="1.500"/><path d="M5 7.500L1 12" stroke="#777" stroke-width="2"/><path d="M5.500 4.500h4" stroke="#777"/></svg>
<div class="sl" style="left:75px;top:956px;width:178px"></div><div class="kn" style="left:132px;top:952px"></div>
<svg class="a" style="left:258px;top:950px" width="12" height="13" viewBox="0 0 12 13"><circle cx="7.500" cy="4.500" r="3.800" fill="none" stroke="#777" stroke-width="1.500"/><path d="M5 7.500L1 12" stroke="#777" stroke-width="2"/><path d="M5.500 4.500h4M7.500 2.500v4" stroke="#777"/></svg>
<svg class="a" style="left:285px;top:949px" width="16" height="16" viewBox="0 0 16 16"><path d="M4 11H3a3 3 0 0 1 0-6 5 5 0 0 1 10 0 3 3 0 0 1 0 6h-1" fill="none" stroke="#888" stroke-width="1.200"/><path d="M8 5l4 5H9.500v6h-3v-6H4z" fill="#777"/></svg>
<svg class="a" style="left:311px;top:949px" width="16" height="15" viewBox="0 0 16 15"><path d="M0 2h5l2 2h6v3H4L1 14H0z" fill="#777"/><path d="M4 8h11l-3 6H1z" fill="#aaa"/><path d="M7 4l5 0 0-2 4 4-4 4V8H8z" fill="#666"/></svg>

<!-- right panel -->
<div class="a" style="left:1580px;top:104px;width:4px;height:873px;background:#8f8f8f"></div>
<div class="a" style="left:1584px;top:105px;width:333px;height:872px;background:#fafafa"></div>
<div class="a" style="left:1584px;top:105px;width:333px;height:20px;background:#eee"></div>
<div class="t" style="left:1589px;top:107px">项目</div><div class="c" style="left:1750px;top:107px;font-weight:bold">环境</div>
<svg class="a" style="left:1875px;top:108px" width="13" height="12" viewBox="0 0 13 12"><rect x="3.500" y=".5" width="9" height="8" fill="none" stroke="#999"/><rect x=".5" y="3.500" width="9" height="8" fill="#eee" stroke="#999"/></svg>
<svg class="a" style="left:1899px;top:108px" width="12" height="12" viewBox="0 0 12 12"><path d="M1 1l10 10M11 1L1 11" stroke="#8a8a8a" stroke-width="2.800"/></svg>
<svg class="i" style="left:1609px;top:132px" width="16" height="16" viewBox="0 0 16 16"><rect x=".5" y=".5" width="15" height="15" fill="#f0f0f0" stroke="#888"/><path d="M3 4h2M7 4h6M3 8h2M7 8h6M3 12h2M7 12h6" stroke="#777"/></svg>
<svg class="i" style="left:1660px;top:131px" width="18" height="18"><use href="#ball"/></svg>
<svg class="i" style="left:1715px;top:132px;color:#1f8cf5" width="16" height="16"><circle cx="8" cy="8" r="8" fill="#b9dcfb"/><use href="#globe" width="16" height="16"/></svg>
<svg class="i" style="left:1771px;top:131px" width="11" height="17" viewBox="0 0 11 17"><path d="M5.500 0a5.500 5.500 0 0 1 3 10v3h-6v-3a5.500 5.500 0 0 1 3-10z" fill="#8a8a8a"/><path d="M3 14h5l-1 3H4z" fill="#aaa"/></svg>
<svg class="i" style="left:1821px;top:133px" width="16" height="15" viewBox="0 0 16 15"><rect x=".5" y="2" width="15" height="12.500" fill="#f2f2f2" stroke="#888"/><circle cx="8" cy="8" r="3.500" fill="none" stroke="#777" stroke-width="1.300"/><path d="M2 2V0h3v2M11 2V0h3v2" stroke="#888" fill="none"/></svg>
<svg class="i" style="left:1874px;top:132px" width="16" height="16" viewBox="0 0 16 16"><rect x="1.500" y="1.500" width="13" height="13" fill="none" stroke="#777" stroke-width="1.500"/><g fill="#fff" stroke="#888"><circle cx="1.500" cy="1.500" r="1.200"/><circle cx="14.500" cy="1.500" r="1.200"/><circle cx="1.500" cy="14.500" r="1.200"/><circle cx="14.500" cy="14.500" r="1.200"/></g></svg>
<div class="c" style="left:1617px;top:149px">场景</div><div class="c" style="left:1669px;top:149px">材质</div><div class="c" style="left:1723px;top:149px">环境</div><div class="c" style="left:1776px;top:149px">照明</div><div class="c" style="left:1828px;top:149px">相机</div><div class="c" style="left:1882px;top:149px">图像</div>
<div class="a" style="left:1591px;top:166px;width:318px;height:2px;background:#e0e0e0"></div>
<div class="a" style="left:1697px;top:166px;width:53px;height:2px;background:#0a78ff"></div>
<svg class="i" style="left:1593px;top:176px;color:#aaa" width="16" height="16"><use href="#globe" width="16" height="16"/></svg>
<svg class="i" style="left:1593px;top:204px;color:#999" width="16" height="16"><use href="#globe" width="16" height="16"/><path d="M11 11v5M8.500 13.500h5" stroke="#666"/></svg>
<svg class="i" style="left:1593px;top:232px" width="16" height="16" viewBox="0 0 16 16"><rect x=".5" y="1" width="10" height="10" fill="none" stroke="#999"/><circle cx="9" cy="9" r="5" fill="#eee" stroke="#999"/><path d="M13 11v5M10.500 13.500h5" stroke="#666"/></svg>
<svg class="i" style="left:1593px;top:260px" width="16" height="16" viewBox="0 0 16 16"><path d="M1 2.500h14M5 2.500V1h6v1.500M2.500 4l1 11.500h9L13.500 4zM6 6v8M8 6v8M10 6v8" fill="none" stroke="#888" stroke-width="1.300"/></svg>
<div class="box" style="left:1615px;top:173px;width:295px;height:130px"></div>
<svg class="i" style="left:1619px;top:178px;color:#1f8cf5" width="12" height="12"><circle cx="6" cy="6" r="6" fill="#b9dcfb"/><use href="#globe" width="12" height="12"/></svg>
<div class="t" style="left:1637px;top:177px">环境</div>
<svg class="a" style="left:1896px;top:179px" width="10" height="11" viewBox="0 0 10 11"><path d="M2 5V3a3 3 0 0 1 6 0" fill="none" stroke="#777" stroke-width="1.200"/><rect y="4.500" width="10" height="6.500" fill="#777"/><rect x="4" y="6.500" width="2" height="2" fill="#fff"/></svg>
<div class="dot" style="left:1738px;top:306px"></div><div class="dot" style="left:1748px;top:306px"></div><div class="dot" style="left:1758px;top:306px"></div>

<!-- HDRI -->
<svg class="a" style="left:1592px;top:361px" width="318" height="159" viewBox="36 63 954 477" preserveAspectRatio="none">
<defs><linearGradient id="hf" x1="0" y1="0" x2="0" y2="1"><stop offset="0" stop-color="#b3b1a9"/><stop offset=".55" stop-color="#a09e98"/><stop offset="1" stop-color="#8f8d88"/></linearGradient>
<linearGradient id="hc" x1="0" y1="0" x2="0" y2="1"><stop offset="0" stop-color="#6f6d5f"/><stop offset=".35" stop-color="#a8a696"/><stop offset="1" stop-color="#c6c4b4"/></linearGradient>
<linearGradient id="hw" x1="0" y1="0" x2="0" y2="1"><stop offset="0" stop-color="#bfbdb3"/><stop offset="1" stop-color="#9f9d95"/></linearGradient>
<filter id="hb"><feGaussianBlur stdDeviation="2"/></filter></defs>
<rect x="36" y="63" width="954" height="477" fill="#a9a79e"/>
<path d="M36 63H990V102L820 122C750 112 680 115 620 135 570 155 540 180 525 225H430C380 170 290 155 190 155 140 130 90 110 36 102z" fill="url(#hc)"/>
<path d="M190 155C270 155 370 180 425 230V300L300 340H190z" fill="url(#hw)"/>
<path d="M36 105L190 155V340L36 400z" fill="url(#hw)"/>
<path d="M525 225C540 170 610 125 700 118L820 125V380L640 370 540 360z" fill="url(#hw)"/>
<path d="M820 125L990 100V405L820 380z" fill="url(#hw)"/>
<path d="M36 400L190 340H300L360 390 450 420 640 378 820 378 990 405V540H36z" fill="url(#hf)"/>
<path d="M400 392L640 378 625 402 500 425 410 420z" fill="#d3d1c9" filter="url(#hb)"/>
<path d="M860 440C900 430 960 450 960 470 920 480 870 470 860 440z" fill="#7c7a75" opacity=".5" filter="url(#hb)"/>
<circle cx="498" cy="488" r="6" fill="#5d5b57"/>
<path d="M100 130V360M265 160V340M320 170V330M600 160V365M680 125V370M760 120V375M890 115V390M95 125V370" stroke="#8d8b83" stroke-width="1.500" opacity=".7"/>
<path d="M190 260H268V288H190z" fill="#7f7f80"/><path d="M200 262H266V285H200z" fill="#f2f4f8"/>
<path d="M430 230H530V365L460 365 440 300z" fill="#6a6859"/>
<path d="M455 240H525V272H455z" fill="#45453f"/><path d="M470 280H520V365H470z" fill="#827e6b"/>
<path d="M300 340L375 290 440 300 445 395 380 400z" fill="#94948a"/>
<path d="M305 335l65-15M325 350l50-10M345 365l30-10M315 325l55-15" stroke="#5a5a54" stroke-width="2.500"/>
<path d="M365 300h4v100h-4zM388 295h4v105h-4zM435 240h4v150h-4zM405 240h4v60h-4z" fill="#1e1e1e"/>
<path d="M392 310H438V390L392 398z" fill="#55534e"/>
<path d="M445 285H470V350H445z" fill="#3f6a58"/>
<path d="M316 106L430 85 465 105 385 128z" fill="#fff"/>
<path d="M402 142L468 134 474 165 436 170z" fill="#f4f6f8"/><path d="M436 178L478 172 474 196 446 197z" fill="#f4f6f8"/>
<path d="M290 132L398 170" stroke="#fbf6d8" stroke-width="12" filter="url(#hb)"/>
<path d="M500 160L525 130M515 100L600 92" stroke="#fbf2cc" stroke-width="11" filter="url(#hb)"/>
<g fill="none" stroke="#55534e" stroke-width="2"><path d="M36 175C90 185 150 210 190 240M36 198C90 205 150 230 190 250M190 240C260 235 340 250 405 275M530 270C600 225 720 195 820 210 880 200 930 195 990 197M530 248C600 200 720 180 820 197 880 180 930 172 990 172"/></g>
<g fill="none" stroke="#b98a58" stroke-width="3.500"><path d="M36 282L160 288 190 295H290C320 285 370 260 410 240M370 285L410 280 440 335M540 358L625 292 830 292 990 280"/></g>
<path d="M100 290v8M160 290v8M640 295v8M725 295v8M805 295v8M935 285v8" stroke="#222" stroke-width="4"/>
</svg>
<div class="a" style="left:1908px;top:380px;width:6px;height:57px;background:#6f6f6f;border-radius:3px;box-shadow:0 0 0 1px #ddd"></div>
<div class="a" style="left:1909px;top:418px;width:5px;height:17px;background:repeating-linear-gradient(#3fbf4f 0,#3fbf4f 1px,#6f6f6f 1px,#6f6f6f 2px)"></div>
<div class="dot" style="left:1738px;top:567px"></div><div class="dot" style="left:1748px;top:567px"></div><div class="dot" style="left:1758px;top:567px"></div>
<div class="c" style="left:1702px;top:579px">设置</div><div class="c" style="left:1797px;top:579px"><span class="m">HDRI</span> 编辑器</div>
<div class="a" style="left:1655px;top:596px;width:190px;height:2px;background:#e0e0e0"></div><div class="a" style="left:1655px;top:596px;width:95px;height:2px;background:#0a78ff"></div>
<div class="a" style="left:1898px;top:603px;width:12px;height:365px;background:#f5f5f5"></div>
<div class="a" style="left:1898px;top:603px;width:12px;height:165px;background:#dfdfdf"></div>
<div class="box" style="left:1592px;top:605px;width:256px;height:18px"></div>
<div class="t m" style="left:1595px;top:607px;font-size:11.500px">Dosch-Stairwell_2k.hdz</div>
<svg class="a" style="left:1855px;top:607px" width="16" height="14" viewBox="0 0 16 14"><path d="M0 1h5l2 2h6v3H4L1 13H0z" fill="#777"/><path d="M4 7h12l-3 6H1z" fill="#999"/></svg>
<svg class="a" style="left:1880px;top:607px" width="15" height="15" viewBox="0 0 15 15"><path d="M12.500 5A6 6 0 0 0 2.500 4M2.500 10a6 6 0 0 0 10 1" fill="none" stroke="#888" stroke-width="2.200"/><path d="M9.500 6H15V.5zM5.500 9H0v5.500z" fill="#888"/></svg>

<div class="sec" style="top:631px"><svg width="8" height="6"><path d="M.5 .5L4 4 7.500 .5" fill="none" stroke="#0a78ff" stroke-width="2"/></svg><b>调节</b></div>
<div class="t" style="left:1600px;top:656px">亮度</div><div class="inp" style="top:655px">1</div>
<div class="sl" style="left:1601px;top:679px;width:288px"></div><div class="kn" style="left:1740px;top:675px"></div>
<div class="t" style="left:1600px;top:694px">对比度</div><div class="inp" style="top:693px">1</div>
<div class="sl" style="left:1601px;top:717px;width:288px"></div><div class="kn" style="left:1740px;top:713px"></div>
<div class="sec" style="top:734px"><svg width="8" height="6"><path d="M.5 .5L4 4 7.500 .5" fill="none" stroke="#0a78ff" stroke-width="2"/></svg><b>转换</b></div>
<div class="t" style="left:1600px;top:759px">大小</div><div class="inp" style="top:758px">5706毫米</div>
<div class="sl" style="left:1601px;top:782px;width:288px"></div><div class="kn" style="left:1619px;top:778px"></div>
<div class="t" style="left:1600px;top:797px">高度</div><div class="inp" style="top:796px">0</div>
<div class="sl" style="left:1601px;top:820px;width:288px"></div><div class="kn" style="left:1740px;top:816px"></div>
<div class="t" style="left:1600px;top:836px">旋转:</div>
<div class="a" style="left:1665px;top:836px;width:116px;height:15px;background:linear-gradient(90deg,#6a6a6a,#b0b0b0 25%,#dcdcdc 50%,#b0b0b0 75%,#6a6a6a);border-bottom:1px solid #999;box-sizing:border-box"></div>
<div class="a" style="left:1665px;top:838px;width:116px;height:10px;background:repeating-linear-gradient(90deg,rgba(255,255,255,.45) 0,rgba(255,255,255,.45) 1px,transparent 1px,transparent 9px)"></div>
<div class="inp" style="top:834px;height:19px">0°</div>
<div class="sec" style="top:862px"><svg width="8" height="6"><path d="M.5 .5L4 4 7.500 .5" fill="none" stroke="#0a78ff" stroke-width="2"/></svg><b>背景</b></div>
<div class="rd" style="top:888px"></div><div class="t" style="left:1620px;top:887px">照明环境</div>
<div class="rd" style="top:912px"></div><div class="t" style="left:1620px;top:911px">颜色</div>
<div class="a" style="left:1827px;top:911px;width:60px;height:16px;border:1px solid #555;border-radius:4px;box-sizing:border-box;background:#fff"></div>
<div class="rd" style="top:936px;background:#0a84ff"></div><div class="t" style="left:1620px;top:935px">背景图像</div>
<div class="a" style="left:1682px;top:966px;width:126px;height:3px;background:linear-gradient(90deg,#aaa89c,#c4c2b4 60%,#8c9090)"></div>

<!-- bottom bar -->
<div class="a" style="left:0;top:976px;width:1917px;height:1px;background:#5a5a5a"></div>
<div class="a" style="left:0;top:977px;width:1917px;height:62px;background:#fafafa"></div>
<div class="a" style="left:0;top:977px;width:340px;height:1px;background:#e0e0e0"></div>
<div class="a" style="left:1580px;top:977px;width:337px;height:1px;background:#e0e0e0"></div>
<div class="a" style="left:3px;top:982px;height:52px;width:0;border-left:2px dotted #bbb"></div>
<svg class="a" style="left:26px;top:988px" width="34" height="29" viewBox="0 0 34 29"><path d="M8 23a6.500 6.500 0 0 1-2-12.700A8 8 0 0 1 14 4 7 7 0 0 1 24 5.500a7 7 0 0 1 5 7A5.500 5.500 0 0 1 27 23" fill="none" stroke="#8a8a8a" stroke-width="2"/><circle cx="17" cy="16" r="8" fill="none" stroke="#777" stroke-width="4.500" stroke-dasharray="7 1.500"/><circle cx="17" cy="16" r="3" fill="#777"/></svg>
<div class="c" style="left:43px;top:1019px">云库</div>

<svg class="a" style="left:737px;top:985px" width="35" height="33" viewBox="0 0 35 33"><circle cx="14" cy="14" r="12" fill="none" stroke="#8a8a8a" stroke-width="2.500"/><path d="M14 0v6M8 12h12l-6 8z" fill="#8a8a8a" stroke="#8a8a8a" stroke-width="2"/><circle cx="25" cy="24" r="8" fill="#fafafa" stroke="#8a8a8a" stroke-width="2"/><path d="M25 20v8M21 24h8" stroke="#8a8a8a" stroke-width="2"/></svg>
<div class="c" style="left:755px;top:1019px">导入</div>
<div class="bb" style="left:790px"></div><div class="bb" style="left:860px"></div>
<svg class="a" style="left:803px;top:985px" width="5" height="3"><path d="M0 3L2.500 0 5 3z" fill="#444"/></svg>
<svg class="a" style="left:873px;top:985px" width="5" height="3"><path d="M0 3L2.500 0 5 3z" fill="#444"/></svg>
<svg class="a" style="left:807px;top:988px" width="34" height="28" viewBox="0 0 34 28"><path d="M17 4.500C12 1 7 1 3 2L1.500 26c5-1 11-1 15.500 1.500V4.500C22 1 27 1 31 2l1.500 24c-5-1-11-1-15.500 1.500" fill="none" stroke="#0a84ff" stroke-width="2.200"/></svg>
<div class="c" style="left:824px;top:1019px">库</div>
<svg class="a" style="left:876px;top:987px" width="36" height="30" viewBox="0 0 36 30"><rect x="1.500" y="1.500" width="30" height="27" rx="2" fill="#fff" stroke="#0a84ff" stroke-width="3"/><path d="M7 9h20M7 15h20M7 21h20" stroke="#0a84ff" stroke-width="1.500"/><path d="M33 7v4M33 15v4M33 23v3" stroke="#0a84ff" stroke-width="2.500"/></svg>
<div class="c" style="left:893px;top:1019px">项目</div>
<svg class="a" style="left:945px;top:985px" width="34" height="34" viewBox="0 0 34 34"><path d="M7 10A15 15 0 1 1 3 20" fill="none" stroke="#8a8a8a" stroke-width="2.500"/><path d="M0 10h10v-9z" fill="#8a8a8a"/><path d="M13 10l11 7-11 7z" fill="#8a8a8a"/></svg>
<div class="c" style="left:962px;top:1019px">动画</div>
<svg class="a" style="left:1014px;top:984px" width="35" height="34" viewBox="0 0 35 34"><path d="M17.500 1l11 5v12l-11 5-11-5V6zM6.500 6l11 5 11-5M17.500 11v12" fill="none" stroke="#8a8a8a" stroke-width="2"/><path d="M6 13C1 18 1 26 9 29M29 13c5 5 5 13-3 16" fill="none" stroke="#8a8a8a" stroke-width="3"/><path d="M8 26l8 5-9 3z" fill="#777"/></svg>
<div class="c m" style="left:1031px;top:1019px;font-size:10.500px;font-weight:bold;color:#111">KeyShotXR</div>
<svg class="a" style="left:1085px;top:985px" width="30" height="34" viewBox="0 0 30 34"><ellipse cx="15" cy="16" rx="11" ry="15" fill="none" stroke="#e2e2e2" stroke-width="2.500"/><rect x="0" y="10" width="30" height="12" rx="2" fill="#dcdcdc"/><path d="M16 20l3-8M20 20l3-8" stroke="#fafafa" stroke-width="2"/></svg>
<div class="c m g" style="left:1100px;top:1019px;font-size:10.500px;color:#999">KeyVR</div>
<svg class="a" style="left:1152px;top:985px" width="35" height="33" viewBox="0 0 35 33"><rect x="1.500" y="4" width="28" height="22" fill="none" stroke="#8a8a8a" stroke-width="2.500"/><path d="M8 4V1h6v3" fill="none" stroke="#8a8a8a" stroke-width="2"/><circle cx="14" cy="15" r="6.500" fill="none" stroke="#8a8a8a" stroke-width="2"/><circle cx="26" cy="23" r="8" fill="#fafafa" stroke="#8a8a8a" stroke-width="2.200"/><path d="M22 23l3 3 5-6" fill="none" stroke="#8a8a8a" stroke-width="2"/></svg>
<div class="c" style="left:1169px;top:1019px">渲染</div>
<svg class="a" style="left:1863px;top:985px" width="35" height="33" viewBox="0 0 35 33"><path d="M1 8V1h6M11 1h7M22 1h3v8M1 13v10h8" fill="none" stroke="#8a8a8a" stroke-width="2.500"/><circle cx="25" cy="24" r="7" fill="none" stroke="#8a8a8a" stroke-width="2"/><path d="M25 15v18M16 24h18" stroke="#8a8a8a" stroke-width="1.500"/></svg>
<div class="c" style="left:1880px;top:1019px">截屏</div>
</body></html>
